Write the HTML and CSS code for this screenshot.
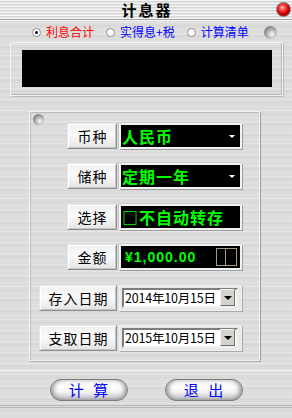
FILE: index.html
```html
<!DOCTYPE html>
<html lang="zh-CN">
<head>
<meta charset="utf-8">
<title>计息器</title>
<link rel="stylesheet" href="styles.css">
</head>
<body>
<div class="win">
  <header class="titlebar">
    <span class="spacer"></span>
    <h1 class="title">计息器</h1>
    <span class="closeball"></span>
  </header>

  <div class="radios">
    <label class="radio red"><i class="dot on"></i>利息合计</label>
    <label class="radio blue"><i class="dot"></i>实得息+税</label>
    <label class="radio blue"><i class="dot"></i>计算清单</label>
    <span class="knob knob-big"></span>
  </div>

  <div class="display"><div class="screen"></div></div>

  <section class="panel">
    <span class="knob knob-small"></span>
    <div class="row">
      <span class="lbl">币种</span>
      <div class="lcd">人民币<i class="arr"></i></div>
    </div>
    <div class="row">
      <span class="lbl">储种</span>
      <div class="lcd">定期一年<i class="arr"></i></div>
    </div>
    <div class="row">
      <span class="lbl">选择</span>
      <div class="lcd">□不自动转存</div>
    </div>
    <div class="row">
      <span class="lbl">金额</span>
      <div class="lcd money"><span class="amount">¥1,000.00</span><span class="calcbox"><i></i><i></i></span></div>
    </div>
    <div class="row">
      <span class="lbl wide">存入日期</span>
      <div class="date"><div class="date-in"><span class="date-text">2014年10月15日</span><span class="drop"><i></i></span></div></div>
    </div>
    <div class="row">
      <span class="lbl wide">支取日期</span>
      <div class="date"><div class="date-in"><span class="date-text">2015年10月15日</span><span class="drop"><i></i></span></div></div>
    </div>
  </section>

  <footer class="actions">
    <button class="pill">计 算</button>
    <button class="pill">退 出</button>
  </footer>
</div>
</body>
</html>
```

FILE: styles.css
```css
html, body {
  margin: 0;
  padding: 0;
}
body {
  width: 292px;
  height: 418px;
  overflow: hidden;
  font-family: "Noto Sans CJK SC", "Liberation Sans", sans-serif;
  background-color: #dcdcdc;
  background-image:
    repeating-linear-gradient(180deg, rgba(255,255,255,0.3) 0 1px, transparent 1px 3px, rgba(0,0,0,0.03) 3px 4px, transparent 4px 7px, rgba(255,255,255,0.18) 7px 8px, transparent 8px 11px);
}
.win {
  width: 292px;
  height: 418px;
  display: flex;
  flex-direction: column;
}

/* title bar */
.titlebar {
  height: 19px;
  display: grid;
  grid-template-columns: 1fr auto 1fr;
  align-items: center;
  border-bottom: 1px solid #a4a4a4;
  background: repeating-linear-gradient(180deg, #f6f6f6 0 1px, #d4d4d4 1px 2px, #e6e6e6 2px 3px);
}
.title {
  margin: 0;
  font-size: 15px;
  font-weight: bold;
  letter-spacing: 2px;
  line-height: 19px;
  color: #000;
  padding-left: 2px;
}
.closeball {
  justify-self: end;
  margin-right: 1px;
  width: 15px;
  height: 15px;
  border-radius: 50%;
  box-sizing: border-box;
  border: 1px solid #7a7a7a;
  background: radial-gradient(circle at 42% 35%, #ffd0d0 0, #ff5050 22%, #d00000 55%, #800000 100%);
}

/* radios */
.radios {
  height: 22px;
  display: flex;
  align-items: center;
  padding-left: 32px;
  padding-top: 1px;
  box-sizing: border-box;
  border-top: 1px solid #f6f6f6;
  font-size: 12px;
}
.radio {
  display: flex;
  align-items: center;
  line-height: 14px;
}
.radio + .radio { margin-left: 12px; }
.red { color: #ff0000; }
.blue { color: #0000ff; }
.dot {
  width: 9px;
  height: 9px;
  box-sizing: border-box;
  border-radius: 50%;
  border: 1px solid #8a8a8a;
  background: #fff;
  margin-right: 5px;
  display: flex;
  align-items: center;
  justify-content: center;
}
.dot.on::after {
  content: "";
  width: 3px;
  height: 3px;
  border-radius: 50%;
  background: #000;
}
.knob {
  display: block;
  border-radius: 50%;
  background: radial-gradient(circle at 62% 65%, #fafafa 0, #d0d0d0 25%, #8c8c8c 65%, #5c5c5c 100%);
}
.knob-big {
  width: 13px;
  height: 13px;
  margin-left: auto;
  margin-right: 15px;
}

/* display */
.display {
  margin: 0 9px 0 10px;
  height: 54px;
  box-sizing: border-box;
  border: 1px solid #f4f4f4;
  box-shadow: inset -1px -1px 0 #b8b8b8, 1px 1px 0 #bcbcbc;
  padding: 7px 10px 8px 11px;
}
.screen {
  height: 100%;
  background: #000;
}

/* panel */
.panel {
  position: relative;
  margin: 15px 31px 0 29px;
  height: 251px;
  box-sizing: border-box;
  border: 1px solid #f6f6f6;
  border-right-color: #a0a0a0;
  border-bottom-color: #acacac;
  box-shadow: inset -1px -1px 0 #f2f2f2, inset 1px 1px 0 #bcbcbc;
  padding: 11px 18px 0 0;
  display: flex;
  flex-direction: column;
  gap: 14.4px;
}
.knob-small {
  position: absolute;
  left: 3px;
  top: 2px;
  width: 11px;
  height: 11px;
}
.row {
  height: 26px;
  display: flex;
  justify-content: flex-end;
  align-items: stretch;
  gap: 2px;
}
.lbl {
  width: 50px;
  box-sizing: border-box;
  border: 1px solid;
  border-color: #e6e6e6 #8e8e8e #8e8e8e #e6e6e6;
  box-shadow: inset 1px 1px 0 #ffffff, inset -1px -1px 0 #c4c4c4;
  background: linear-gradient(180deg, #f0f0f0 0%, #fafafa 45%, #e4e4e4 100%);
  display: flex;
  align-items: center;
  justify-content: center;
  font-size: 14px;
  letter-spacing: 1px;
  padding-left: 1px;
  color: #000;
}
.lbl.wide { width: 78px; }

.lcd {
  position: relative;
  width: 123px;
  box-sizing: border-box;
  background: #000;
  border: 2px solid #f2f2f2;
  box-shadow: 1px 1px 0 #9c9c9c, -1px -1px 0 #c8c8c8;
  color: #00ff00;
  font-size: 16px;
  font-weight: bold;
  letter-spacing: 1px;
  display: flex;
  align-items: center;
  padding-left: 1px;
  line-height: 1;
}
.arr {
  position: absolute;
  right: 5px;
  top: 10px;
  width: 0;
  height: 0;
  border-left: 3px solid transparent;
  border-right: 3px solid transparent;
  border-top: 3px solid #fff;
}
.money {
  padding-left: 4px;
  justify-content: space-between;
  padding-right: 3px;
}
.amount {
  font-family: "Liberation Sans", sans-serif;
  font-size: 14px;
  font-weight: bold;
  letter-spacing: 1px;
}
.calcbox {
  display: flex;
  height: 18px;
}
.calcbox i {
  width: 10px;
  box-sizing: border-box;
  border: 1px solid #a8987e;
}
.calcbox i + i { border-left: none; width: 11px; }

/* date picker */
.date {
  width: 123px;
  box-sizing: border-box;
  padding: 2px 3px 2px 2px;
  border: 1px solid #f0f0f0;
  box-shadow: 1px 1px 0 #a8a8a8;
  background: #e8e8e8;
}
.date-in {
  height: 100%;
  box-sizing: border-box;
  border: 2px solid;
  border-color: #7c7c7c #f0f0f0 #f0f0f0 #7c7c7c;
  background: #fff;
  display: flex;
  align-items: center;
  padding-left: 1px;
}
.date-text {
  flex: 1;
  font-size: 12.5px;
  color: #000;
  letter-spacing: -0.2px;
  white-space: nowrap;
}
.drop {
  width: 15px;
  height: 17px;
  box-sizing: border-box;
  border: 1px solid;
  border-color: #f4f4f4 #6c6c6c #6c6c6c #f4f4f4;
  background: #d6d3ce;
  display: flex;
  align-items: center;
  justify-content: center;
  margin-right: 1px;
}
.drop i {
  width: 0;
  height: 0;
  border-left: 4px solid transparent;
  border-right: 4px solid transparent;
  border-top: 4px solid #000;
}

/* buttons */
.actions {
  margin-top: 8px;
  height: 38px;
  box-sizing: border-box;
  border-top: 1px solid #f6f6f6;
  border-bottom: 3px double #b6b6b6;
  display: flex;
  justify-content: center;
  align-items: center;
  gap: 37px;
  padding-top: 4px;
}
.pill {
  width: 78px;
  height: 22px;
  border-radius: 11px;
  border: 1px solid #7a7a7a;
  background: linear-gradient(180deg, #e8e8e8 0%, #ffffff 30%, #f4f4f4 60%, #d0d0d0 85%, #a8a8a8 100%);
  box-shadow: inset 5px 0 5px -3px #8a8a8a, inset -5px 0 5px -3px #8a8a8a;
  color: #0000ff;
  font-family: "Noto Sans CJK SC", sans-serif;
  font-size: 15px;
  letter-spacing: 3px;
  padding: 0 0 0 3px;
  line-height: 20px;
}
```
